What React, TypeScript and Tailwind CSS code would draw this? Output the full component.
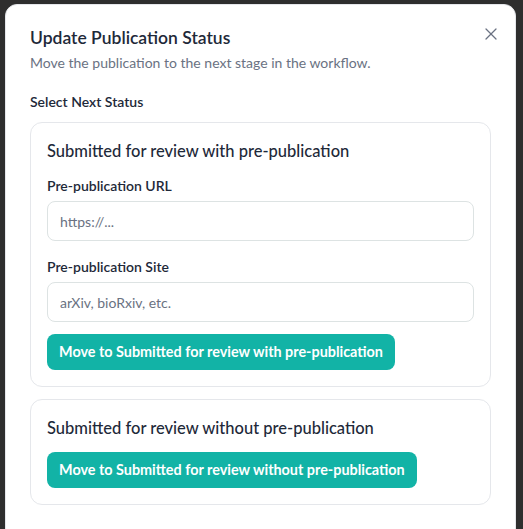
import { X } from "lucide-react";

const font = { fontFamily: "Lato, 'Noto Sans', sans-serif" };

function Field({ label, placeholder }: { label: string; placeholder: string }) {
  return (
    <div className="flex flex-col gap-[5px]">
      <label className="text-sm font-semibold text-gray-800 leading-5">{label}</label>
      <input
        placeholder={placeholder}
        className="h-[40px] w-full rounded-lg border border-[#dde3e3] bg-white px-3 text-sm text-gray-800 placeholder:text-gray-500 outline-none"
      />
    </div>
  );
}

export default function App() {
  return (
    <div className="min-h-[529px] w-[523px] bg-[#2e2e2e] pt-[4px] pl-[5px] overflow-hidden" style={font}>
      <div className="relative w-[511px] h-[540px] rounded-xl border border-gray-200 bg-white p-6">
        <button className="absolute right-[14px] top-[19px] text-gray-500">
          <X size={20} strokeWidth={1.5} />
        </button>

        {/* Header */}
        <h2 className="text-[17.5px] font-semibold leading-[18px] text-gray-800">Update Publication Status</h2>
        <p className="mt-1.5 text-sm text-gray-500 leading-5">Move the publication to the next stage in the workflow.</p>

        <h3 className="mt-[19px] text-sm font-semibold text-gray-800 leading-5">Select Next Status</h3>

        <div className="mt-[10px] flex flex-col gap-3">
          {/* with pre-publication */}
          <div className="rounded-xl border border-gray-200 p-4">
            <h4 className="text-[16.5px] font-medium text-gray-800 leading-6">Submitted for review with pre-publication</h4>
            <div className="mt-[13px] flex flex-col gap-4">
              <Field label="Pre-publication URL" placeholder="https://..." />
              <Field label="Pre-publication Site" placeholder="arXiv, bioRxiv, etc." />
            </div>
            <button className="mt-3 h-9 rounded-lg bg-[#12b3a6] px-3 text-[14.4px] font-bold text-white">
              Move to Submitted for review with pre-publication
            </button>
          </div>

          {/* without pre-publication */}
          <div className="rounded-xl border border-gray-200 p-4">
            <h4 className="text-[16.5px] font-medium text-gray-800 leading-6">Submitted for review without pre-publication</h4>
            <button className="mt-3 h-9 rounded-lg bg-[#12b3a6] px-3 text-[14.4px] font-bold text-white">
              Move to Submitted for review without pre-publication
            </button>
          </div>
        </div>
      </div>
    </div>
  );
}
